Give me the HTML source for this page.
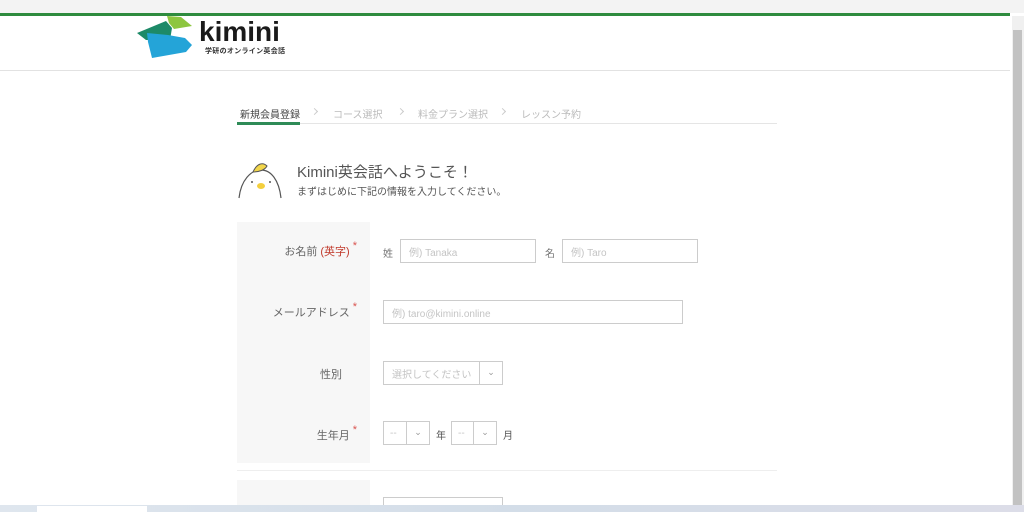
<!DOCTYPE html>
<html><head><meta charset="utf-8"><style>
*{margin:0;padding:0;box-sizing:border-box}
body{width:1024px;height:512px;overflow:hidden;background:#fff;font-family:"Liberation Sans","Noto Sans CJK JP",sans-serif;position:relative;color:#555}
.a{position:absolute}
.inp{position:absolute;border:1px solid #ccc;background:#fff;font-size:10px;color:#c4c4c4;padding-left:8px;display:flex;align-items:center}
.lbl{position:absolute;right:0;font-size:11px;color:#666;text-align:right;white-space:nowrap}
.star{color:#d9534f;font-size:11px;vertical-align:top;margin-left:3px;position:relative;top:-3px}
.sel{position:absolute;border:1px solid #ccc;height:24px;font-size:10px;color:#c4c4c4;display:flex;align-items:center}
.sel span.c{position:absolute;right:0;top:0;width:23px;height:22px;border-left:1px solid #ccc;text-align:center;color:#999;font-size:9px;line-height:20px}
.tab{position:absolute;top:106px;font-size:10px;color:#bbb;white-space:nowrap}
.arr{position:absolute;top:109px;width:5px;height:5px;border-top:1px solid #ccc;border-right:1px solid #ccc;transform:rotate(45deg)}
</style></head><body>
<div class="a" style="left:0;top:0;width:1024px;height:13px;background:#f3f3f3"></div>
<div class="a" style="left:0;top:13px;width:1010px;height:3px;background:#2e8b3e"></div>
<div class="a" style="left:1012px;top:16px;width:12px;height:490px;background:#f0f0f0"></div>
<div class="a" style="left:1013px;top:30px;width:9px;height:475px;background:#c2c2c2"></div>
<div class="a" style="left:0;top:70px;width:1010px;height:1px;background:#e2e2e2"></div>
<svg class="a" style="left:0;top:0" width="200" height="70">
<polygon points="137,33 166,21 172,28 170,40 146,40" fill="#1d8a68"/>
<polygon points="167,16 181,17 192,26 174,29 169,23" fill="#8dc63f"/>
<polygon points="147,33 168,35 185,38 192,45 186,52 152,58 148,42" fill="#24a4d8"/>
</svg>
<div class="a" style="left:199px;top:16px;font-size:28px;font-weight:bold;color:#1a1a1a">kimini</div>
<div class="a" style="left:205px;top:46px;font-size:7px;color:#333;font-weight:bold;letter-spacing:0.3px">学研のオンライン英会話</div>
<div class="tab" style="left:240px;color:#444">新規会員登録</div>
<div class="arr" style="left:312px"></div>
<div class="tab" style="left:333px">コース選択</div>
<div class="arr" style="left:398px"></div>
<div class="tab" style="left:418px">料金プラン選択</div>
<div class="arr" style="left:500px"></div>
<div class="tab" style="left:521px">レッスン予約</div>
<div class="a" style="left:237px;top:123px;width:540px;height:1px;background:#e5e5e5"></div>
<div class="a" style="left:237px;top:122px;width:63px;height:3px;background:#2e8b57"></div>
<svg class="a" style="left:237px;top:158px" width="46" height="42" viewBox="0 0 46 42">
<path d="M2 40 C4 22 14 12 24 12 C34 12 42 22 44 40" fill="#fff" stroke="#555" stroke-width="1.2"/>
<path d="M16 14 C20 5 26 4 30 8 C28 12 22 14 16 14Z" fill="#f2d64b" stroke="#555" stroke-width="1"/>
<ellipse cx="24" cy="28" rx="4" ry="3" fill="#f4cf3d"/>
<circle cx="15" cy="24" r="1" fill="#555"/><circle cx="33" cy="24" r="1" fill="#555"/>
</svg>
<div class="a" style="left:297px;top:161px;font-size:15px;color:#555">Kimini英会話へようこそ！</div>
<div class="a" style="left:297px;top:183px;font-size:10px;color:#555">まずはじめに下記の情報を入力してください。</div>
<div class="a" style="left:237px;top:222px;width:133px;height:241px;background:#f7f7f7"></div>
<div class="a" style="left:237px;top:470px;width:540px;height:1px;background:#eee"></div>
<div class="a" style="left:237px;top:480px;width:133px;height:30px;background:#f7f7f7"></div>
<div class="a" style="left:237px;top:243px;width:120px;height:14px"><div class="lbl">お名前 <span style="color:#c0392b">(英字)</span><span class="star">*</span></div></div>
<div class="a" style="left:383px;top:245px;font-size:10px;color:#777">姓</div>
<div class="inp" style="left:400px;top:239px;width:136px;height:24px">例) Tanaka</div>
<div class="a" style="left:545px;top:245px;font-size:10px;color:#777">名</div>
<div class="inp" style="left:562px;top:239px;width:136px;height:24px">例) Taro</div>
<div class="a" style="left:237px;top:304px;width:120px;height:14px"><div class="lbl">メールアドレス<span class="star">*</span></div></div>
<div class="inp" style="left:383px;top:300px;width:300px;height:24px">例) taro@kimini.online</div>
<div class="a" style="left:237px;top:366px;width:120px;height:14px"><div class="lbl" style="right:15px">性別</div></div>
<div class="sel" style="left:383px;top:361px;width:120px;padding-left:8px">選択してください<span class="c">⌄</span></div>
<div class="a" style="left:237px;top:427px;width:120px;height:14px"><div class="lbl">生年月<span class="star">*</span></div></div>
<div class="sel" style="left:383px;top:421px;width:47px;padding-left:6px">--<span class="c">⌄</span></div>
<div class="a" style="left:436px;top:427px;font-size:10px;color:#555">年</div>
<div class="sel" style="left:451px;top:421px;width:46px;padding-left:6px">--<span class="c">⌄</span></div>
<div class="a" style="left:503px;top:427px;font-size:10px;color:#555">月</div>
<div class="a" style="left:383px;top:497px;width:120px;height:15px;border:1px solid #ccc;border-bottom:none"></div>
<div class="a" style="left:0;top:505px;width:1024px;height:7px;background:linear-gradient(90deg,#dfe6ee,#d3dde8 50%,#dcdde8)"></div>
<div class="a" style="left:37px;top:506px;width:110px;height:6px;background:#fff"></div>
</body></html>
